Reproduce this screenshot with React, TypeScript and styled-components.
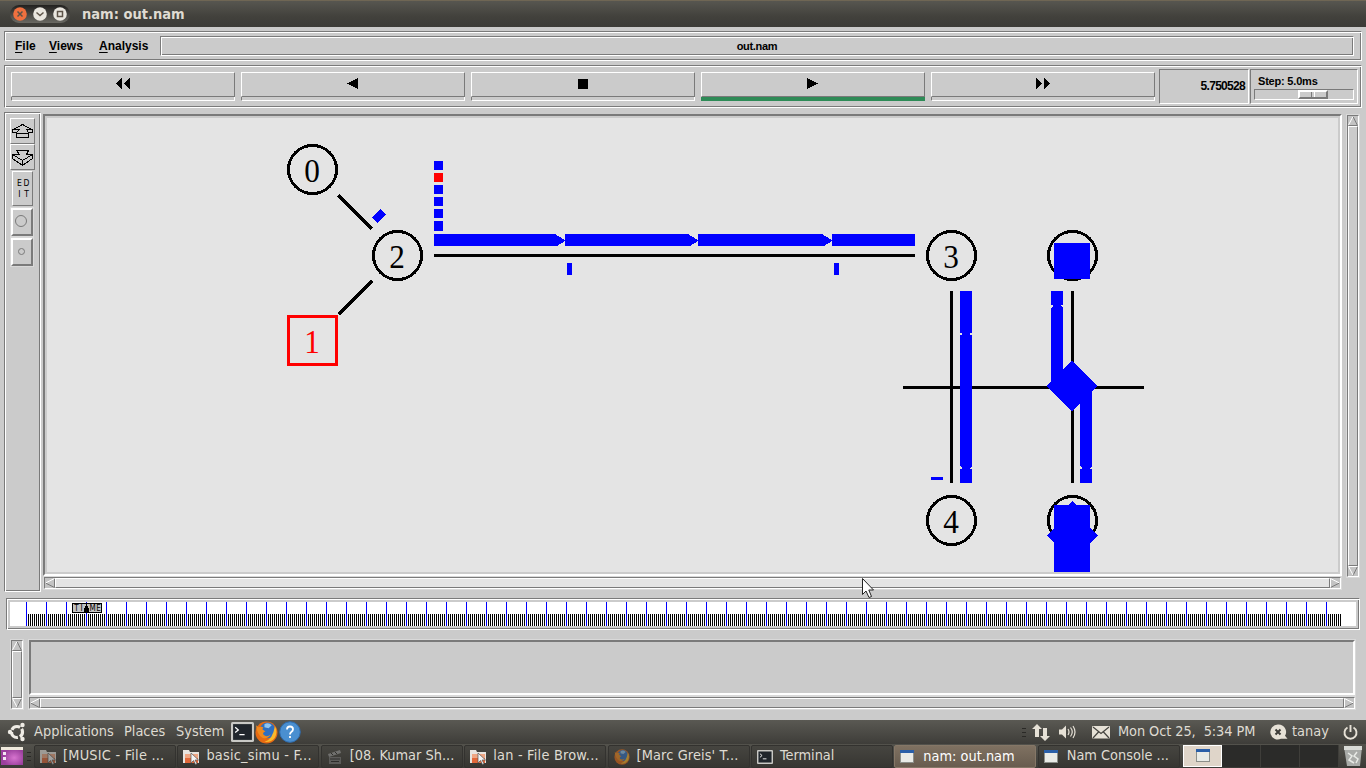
import React from "react";
import styled, { createGlobalStyle, css } from "styled-components";

const BG = "#cbcbcb";
const DARK = "#7a7a7a";
const CANVAS = "#e4e4e4";
const BLUE = "#0000ff";
const CREAM = "#dfdbd2";

const Global = createGlobalStyle`
  * { box-sizing: border-box; }
  body { margin: 0; background: ${BG}; overflow: hidden; }
  svg { display: block; flex: none; }
`;

const sunken = (w = 1) => css`
  border: ${w}px solid;
  border-color: ${DARK} #fff #fff ${DARK};
`;
const raised = (w = 1) => css`
  border: ${w}px solid;
  border-color: #fff ${DARK} ${DARK} #fff;
`;
const groove = css`
  border: 1px solid;
  border-color: ${DARK} #fff #fff ${DARK};
  box-shadow: inset 1px 1px 0 #fff, inset -1px -1px 0 ${DARK};
`;

const Screen = styled.div`
  width: 1366px;
  height: 768px;
  display: flex;
  flex-direction: column;
  background: ${BG};
  position: relative;
  font: bold 12px "Liberation Sans", sans-serif;
  color: #000;
`;

const TitleBar = styled.div`
  height: 27px;
  flex: none;
  display: flex;
  align-items: center;
  padding-left: 10px;
  border-top: 1px solid #6f6654;
  background: linear-gradient(#575650, #42413c 60%, #3c3b37);
`;
const WindowButtons = styled.div`
  width: 60px;
  height: 18px;
  display: flex;
  align-items: center;
  gap: 6px;
  padding-left: 3px;
  border-radius: 9px;
  background: linear-gradient(#22211f, #6a6963);
`;
const TitleText = styled.div`
  margin-left: 12px;
  font: bold 14.5px "DejaVu Sans Condensed", "DejaVu Sans", sans-serif;
  font-stretch: condensed;
  color: ${CREAM};
  white-space: pre;
`;

const MenuBar = styled.div`
  ${groove}
  margin: 4px 4px 0;
  height: 30px;
  flex: none;
  display: flex;
  padding: 4px 7px 0 10px;
`;
const MenuItem = styled.div<{ $w: number }>`
  width: ${(p) => p.$w}px;
  line-height: 20px;
  u { text-underline-offset: 2px; text-decoration-thickness: 1px; }
`;
const FileLabel = styled.div`
  ${groove}
  flex: 1;
  height: 20px;
  text-align: center;
  font-size: 11px;
  letter-spacing: -0.3px;
  line-height: 18px;
`;

const Transport = styled.div`
  ${groove}
  margin: 4px 4px 0;
  height: 43px;
  flex: none;
  display: flex;
  padding: 3px 3px 0 6px;
`;
const TransportKey = styled.div`
  width: 224px;
  margin: 3px 6px 0 0;
`;
const KeyFace = styled.div`
  ${raised()}
  height: 25px;
  display: flex;
  justify-content: center;
  align-items: center;
  padding-bottom: 1px;
`;
const KeyLamp = styled.div<{ $on?: boolean }>`
  ${sunken()}
  height: 4px;
  border-top: 0;
  background: ${(p) => (p.$on ? "#2e8b57" : BG)};
  ${(p) => p.$on && "border-color: #2e8b57;"}
`;
const Clock = styled.div`
  ${sunken()}
  width: 90px;
  height: 35px;
  margin-left: -2px;
  padding-right: 3px;
  text-align: right;
  line-height: 33px;
  font-size: 12px;
  letter-spacing: -0.7px;
`;
const StepBox = styled.div`
  ${sunken()}
  width: 108px;
  height: 35px;
  margin-left: 1px;
  padding: 5px 3px 0 3px;
  font-size: 11px;
  line-height: 12px;
`;
const StepText = styled.div`
  padding-left: 4px;
  height: 14px;
  letter-spacing: -0.2px;
`;
const Slider = styled.div`
  ${sunken()}
  height: 11px;
  padding-left: 43px;
`;
const SliderKnob = styled.div`
  ${raised(2)}
  width: 30px;
  height: 9px;
  display: flex;
  justify-content: center;
  &::after {
    content: "";
    width: 2px;
    border-left: 1px solid ${DARK};
    border-right: 1px solid #fff;
  }
`;

const MainRow = styled.div`
  margin: 4px 4px 0;
  height: 480px;
  flex: none;
  display: flex;
`;
const SideTools = styled.div`
  ${groove}
  width: 37px;
  padding: 5px 0 0 5px;
`;
const ToolKey = styled.div<{ $w: number; $h: number; $b?: number; $x?: number; $gap?: number }>`
  ${(p) => raised(p.$b ?? 1)}
  width: ${(p) => p.$w}px;
  height: ${(p) => p.$h}px;
  margin: ${(p) => p.$gap ?? 0}px 0 0 ${(p) => p.$x ?? 0}px;
  outline: ${(p) => (p.$b ? "1px solid #d9d9d9" : "none")};
`;
const EditLabel = styled.div`
  display: grid;
  grid-template-columns: 7px 7px;
  justify-content: center;
  text-align: center;
  padding: 6px 0 0 1px;
  font: 8.5px/11px "DejaVu Sans Condensed", "DejaVu Sans", sans-serif;
  font-stretch: condensed;
`;
const ViewColumn = styled.div`
  margin: 2px 0 0 2px;
  width: 1299px;
`;
const CanvasFrame = styled.div`
  ${sunken(2)}
  height: 462px;
  background: ${BG};
  padding: 2px;
`;

const Bar = styled.div<{ $vertical?: boolean; $len: number; $x?: number; $y?: number }>`
  ${sunken()}
  flex: none;
  display: flex;
  flex-direction: ${(p) => (p.$vertical ? "column" : "row")};
  width: ${(p) => (p.$vertical ? 12 : p.$len)}px;
  height: ${(p) => (p.$vertical ? p.$len : 12)}px;
  margin: ${(p) => p.$y ?? 0}px 0 0 ${(p) => p.$x ?? 0}px;
  background: #c3c3c3;
  box-shadow: 0 0 0 1px #d9d9d9;
`;
const Thumb = styled.div<{ $tone: string }>`
  ${raised()}
  flex: 1;
  background: ${(p) => p.$tone};
`;

const Timeline = styled.div`
  ${groove}
  margin: 6px 6px 0;
  height: 32px;
  flex: none;
  padding: 3px;
`;
const BottomRow = styled.div`
  margin: 10px 0 0 11px;
  height: 80px;
  flex: none;
  display: flex;
`;
const NotesColumn = styled.div`
  margin-left: 6px;
  width: 1326px;
`;
const Notes = styled.div`
  ${sunken(2)}
  height: 55px;
  box-shadow: 0 0 0 1px #d9d9d9;
`;

const Panel = styled.div`
  height: 24px;
  flex: none;
  display: flex;
  align-items: center;
  font: 14.4px "DejaVu Sans Condensed", "DejaVu Sans", sans-serif;
  font-stretch: condensed;
  color: ${CREAM};
  background: linear-gradient(#5a5953, #3e3d39);
`;
const TaskPanel = styled(Panel)`
  align-items: stretch;
  background: linear-gradient(#53524c, #3b3a36);
`;
const PanelText = styled.div<{ $w: number; $ls?: number }>`
  width: ${(p) => p.$w}px;
  letter-spacing: ${(p) => p.$ls ?? 0}px;
  white-space: pre;
  line-height: 22px;
  height: 24px;
`;
const PanelIcon = styled.div<{ $w: number }>`
  width: ${(p) => p.$w}px;
`;
const Spacer = styled.div`
  flex: 1;
`;
const Task = styled.div<{ $active?: boolean }>`
  width: 142px;
  margin: 1px 1.4px 0 0;
  display: flex;
  align-items: center;
  padding-left: 5px;
  border-radius: 2px;
  border: 1px solid ${(p) => (p.$active ? "#857767" : "#33322f")};
  color: ${(p) => (p.$active ? "#fff" : CREAM)};
  background: ${(p) =>
    p.$active ? "linear-gradient(#7f7161, #685c4f)" : "linear-gradient(#464540, #373632)"};
`;
const TaskIcon = styled.div<{ $dim?: boolean }>`
  width: 23px;
  opacity: ${(p) => (p.$dim ? 0.55 : 1)};
`;
const TaskText = styled.div<{ $active?: boolean; $ls?: number }>`
  white-space: pre;
  line-height: 18px;
  letter-spacing: ${(p) => p.$ls ?? 0}px;
  padding-bottom: ${(p) => (p.$active ? 1 : 3)}px;
`;
const Workspaces = styled.div`
  display: flex;
  margin: 1px 0 1px 2px;
  background: #2b2b29;
`;
const Workspace = styled.div<{ $on?: boolean }>`
  width: 39px;
  display: flex;
  justify-content: center;
  padding-top: 3px;
  ${(p) =>
    p.$on
      ? "border: 1px solid #fff; background: #dfd5c9;"
      : "border-right: 1px solid #3f3e3a;"}
`;
const Cursor = styled.svg`
  position: absolute;
  left: 861px;
  top: 577px;
`;

const ARROWS: Record<string, string[]> = {
  up: ["M5 0.5L0.5 9", "M5 0.5L9.5 9.5M0.5 9.5H9.5"],
  down: ["M0.5 0.5H9.5M0.5 0.5L5 9", "M9.5 0.5L5 9.5"],
  left: ["M0.5 5L9.5 0.5", "M0.5 5L9.5 9.5V0.5"],
  right: ["M0.5 9.5V0.5L9.5 5", "M9.5 5L0.5 9.5"],
};

const Arrow = ({ dir }: { dir: string }) => (
  <svg width="10" height="10" fill="none">
    <path d={ARROWS[dir][1]} stroke={DARK} />
    <path d={ARROWS[dir][0]} stroke="#fff" />
  </svg>
);

const Scrollbar = (p: { vertical?: boolean; len: number; x?: number; y?: number; tone?: string }) => (
  <Bar $vertical={p.vertical} $len={p.len} $x={p.x} $y={p.y}>
    <Arrow dir={p.vertical ? "up" : "left"} />
    <Thumb $tone={p.tone ?? BG} />
    <Arrow dir={p.vertical ? "down" : "right"} />
  </Bar>
);

const KEYS = [
  "M7 0V11L1 5.5ZM15 0V11L9 5.5Z",
  "M13 0V11L2 5.5Z",
  "M3 1H13V11H3Z",
  "M2 0V11L13 5.5Z",
  "M1 0V11L7 5.5ZM9 0V11L15 5.5Z",
];

const NODES = [
  { id: "0", x: 312.5, y: 169.5 },
  { id: "2", x: 397.5, y: 255.5 },
  { id: "3", x: 951.5, y: 255.5 },
  { id: "5", x: 1072.5, y: 255.5 },
  { id: "4", x: 951.5, y: 520.5 },
  { id: "6", x: 1072.5, y: 520.5 },
];

const Network = () => (
  <svg width="1291" height="454" viewBox="47 118 1291 454" style={{ background: CANVAS }} shapeRendering="crispEdges">
    <g stroke="#000" strokeWidth="3" fill="none">
      <path d="M338.5 195.5L372 229M372 281L338.5 314.5" />
      <path d="M434 255.5H915M903 387.5H1144M951.5 291V483M1072.5 291V483" />
      {NODES.map((n) => (
        <circle key={n.id} cx={n.x} cy={n.y} r="24" />
      ))}
      <rect x="288.5" y="316.5" width="48" height="48" stroke="#f00" />
    </g>
    <g fontFamily="Liberation Serif, serif" fontWeight="400" fontSize="34" textAnchor="middle">
      {NODES.filter((n) => n.id < "5").map((n) => (
        <text key={n.id} transform={`translate(${n.x - 0.5} ${n.y + 12.5}) scale(.92 1)`}>
          {n.id}
        </text>
      ))}
      <text transform="translate(312 353) scale(.92 1)" fill="#f00">
        1
      </text>
    </g>
    <g fill={BLUE}>
      <path d="M381 209L386 215L377.5 223L372 217.5Z" />
      {[161, 185, 197, 209, 221].map((y) => (
        <rect key={y} x="434" y={y} width="9" height={y === 221 ? 10 : 9} />
      ))}
      <rect x="434" y="173" width="9" height="9" fill="#f00" />
      <path d="M434 234H555L565 240V241L557 246H434Z" />
      <path d="M565 234H688L698 240V241L690 246H565Z" />
      <path d="M698 234H822L832 240V241L824 246H698Z" />
      <path d="M832 234H915V246H832Z" />
      <path d="M567 263H572V275H567ZM834 263H839V275H834ZM931 477H943V480H931Z" />
      <path d="M960 291H972V333H970V335H972V466L970 468V469H972V483H960V469H962V468L960 466V335H962V333H960Z" />
      <path d="M1051 291H1063V305H1061V306L1063 308V386H1051V308L1053 306V305H1051Z" />
      <path d="M1080 391H1092V466L1090 468V469H1092V483H1080V469H1082V468L1080 466Z" />
      <path d="M1054 243H1090V279H1054Z" />
      <path d="M1072 361L1097.500 386L1072 411L1046.500 386Z" />
      <path d="M1054 505H1068L1072 501L1076 505H1090V528L1097.500 535.5L1090 543V572H1054V543L1046.500 535.5L1054 528Z" />
    </g>
  </svg>
);

const majors = Array.from({ length: 66 }, (_, i) => 26 + i * 20);
const minors = Array.from({ length: 658 }, (_, i) => 26 + i * 2).filter((x) => (x - 26) % 20 !== 0);

const TimeScale = () => (
  <svg width="1346" height="24" viewBox="10 602 1346 24" style={{ background: "#fff" }} shapeRendering="crispEdges">
    <path d={majors.map((x) => `M${x + 0.5} 602v24`).join("")} stroke={BLUE} />
    <path d={minors.map((x) => `M${x + 0.5} 614v12`).join("")} stroke="#000" />
    <rect x="72.5" y="603.5" width="29" height="9" fill="#c3c3c3" stroke="#000" />
    <path d="M86 603h1v3h1v2h1v5h-5v-5h1v-2h1z" fill="#000" />
    <g
      fontFamily="DejaVu Sans Condensed, DejaVu Sans, sans-serif"
      fontStretch="condensed"
      fontSize="8"
      fontWeight="400"
      textAnchor="middle"
    >
      <text x="76.5" y="611">T</text>
      <text x="81.5" y="611">I</text>
      <text x="92.5" y="611">M</text>
      <text x="98.5" y="611">E</text>
    </g>
  </svg>
);

const WindowDot = ({ fill, mark }: { fill: string; mark: string }) => (
  <svg width="14" height="14">
    <circle cx="7" cy="7" r="6.8" fill={fill} />
    <path d={mark} stroke="#5d5348" strokeWidth="1.5" fill="none" />
  </svg>
);

const TerminalIcon = ({ w, h }: { w: number; h: number }) => (
  <svg width={w} height={h} viewBox="0 0 22 19" preserveAspectRatio="none">
    <rect width="22" height="19" rx="1.5" fill="#c9c9c5" />
    <rect x="2" y="2" width="18" height="15" fill="#20262c" />
    <path d="M4 5l3 2.5-3 2.5M8 12h5" stroke="#fff" strokeWidth="1.2" fill="none" />
  </svg>
);
const FirefoxIcon = ({ s }: { s: number }) => (
  <svg width={s} height={s} viewBox="0 0 22 22">
    <circle cx="11" cy="11" r="10.5" fill="#e66a12" />
    <circle cx="12" cy="9" r="7.5" fill="#2f6fc0" />
    <path d="M9 3q4-2 7 1l-3 3-4-1z" fill="#8fc4ee" />
    <path d="M1 4L3.500 6Q6 5 8 6L7 8L10 10Q7 11 8 13Q11 16 15 13Q12 18 7 16Q2 13 1 4Z" fill="#f08a1d" />
    <path d="M19 5Q22 10 19 16Q15 21 9 20Q17 18 19 5Z" fill="#f9b92c" />
  </svg>
);
const FolderIcon = () => (
  <svg width="17" height="16">
    <path d="M0 1h6l1 2h9v11H0z" fill="#e8e4df" />
    <path d="M2 5h13v9H2z" fill="#e2683a" />
    <path d="M2 5h13v4H2z" fill="#efa683" />
    <path d="M8 4v10l2.500-2.500 2 4 1.500-.8-2-3.700h3.500z" fill="#f4f4f4" stroke="#555" strokeWidth=".7" />
  </svg>
);
const ClapperIcon = () => (
  <svg width="16" height="16">
    <path d="M1 5L13 1l1 3L2 8z" fill="#999" />
    <path d="M2 8h12v7H2z" fill="#777" />
    <path d="M4 4l2 2M8 3l2 2M3 10h10M4 12.500h8" stroke="#222" />
  </svg>
);
const WindowIcon = () => (
  <svg width="14" height="13">
    <rect x=".5" y=".5" width="13" height="12" fill="#e9ebe7" stroke="#8c8f8a" />
    <rect width="14" height="3" fill="#2a5fa8" />
  </svg>
);
const Grip = () => (
  <svg width="4" height="9">
    <path d="M0 .5h4M0 4.500h4M0 8.500h4" stroke="#2a2926" />
  </svg>
);

const TASKS = [
  { text: "[MUSIC - File ...", icon: <FolderIcon />, dim: true, ls: 0.22 },
  { text: "basic_simu - F...", icon: <FolderIcon />, ls: 0.22 },
  { text: "[08. Kumar Sh...", icon: <ClapperIcon />, dim: true },
  { text: "lan - File Brow...", icon: <FolderIcon />, ls: 0.22 },
  { text: "[Marc Greis' T...", icon: <FirefoxIcon s={16} />, dim: true, ls: 0.12 },
  { text: "Terminal", icon: <TerminalIcon w={16} h={14} /> },
  { text: "nam: out.nam", icon: <WindowIcon />, active: true },
  { text: "Nam Console ...", icon: <WindowIcon /> },
];

export default function App() {
  return (
    <Screen>
      <Global />
      <TitleBar>
        <WindowButtons>
          <WindowDot fill="#f0703f" mark="M4.500 4.500l5 5M9.500 4.500l-5 5" />
          <WindowDot fill="#e9e6df" mark="M3.500 5.500l3.500 3 3.500-3" />
          <WindowDot fill="#e9e6df" mark="M4.500 4.500h5v5h-5z" />
        </WindowButtons>
        <TitleText>nam: out.nam</TitleText>
      </TitleBar>

      <MenuBar>
        <MenuItem $w={34}><u>F</u>ile</MenuItem>
        <MenuItem $w={50}><u>V</u>iews</MenuItem>
        <MenuItem $w={61}><u>A</u>nalysis</MenuItem>
        <FileLabel>out.nam</FileLabel>
      </MenuBar>

      <Transport>
        {KEYS.map((d, i) => (
          <TransportKey key={d}>
            <KeyFace>
              <svg width="16" height="12" shapeRendering="crispEdges"><path d={d} /></svg>
            </KeyFace>
            <KeyLamp $on={i === 3} />
          </TransportKey>
        ))}
        <Clock>5.750528</Clock>
        <StepBox>
          <StepText>Step: 5.0ms</StepText>
          <Slider><SliderKnob /></Slider>
        </StepBox>
      </Transport>

      <MainRow>
        <SideTools>
          <ToolKey $w={25} $h={26}>
            <svg width="23" height="24" fill="none" stroke="#000" shapeRendering="crispEdges">
              <path d="M11.500 5.500L20.500 10.500H21.500V13.500H17.500V18.500H5.500V13.500H1.500V10.500H2.500ZM5.500 14.500H17.500M2.500 10.500H8.500L5.500 13.500M20.500 10.500H15.500L17.500 13.500" />
            </svg>
          </ToolKey>
          <ToolKey $w={25} $h={26}>
            <svg width="23" height="24" fill="none" stroke="#000" shapeRendering="crispEdges">
              <path d="M5.500 5.500H17.500L15.500 9.500H21.500V13.500L11.500 20.500L1.500 13.500V9.500H8.500L5.500 5.500M1.500 9.500L11.500 15.500L21.500 9.500M11.500 15.500V20.500" />
            </svg>
          </ToolKey>
          <ToolKey $w={21} $h={35} $x={2} $gap={1}>
            <EditLabel>
              <span>E</span>
              <span>D</span>
              <span>I</span>
              <span>T</span>
            </EditLabel>
          </ToolKey>
          <ToolKey $w={22} $h={28} $b={2} $x={1} $gap={2}>
            <svg width="18" height="24" fill="none" stroke={DARK}><circle cx="8" cy="11" r="5.500" /></svg>
          </ToolKey>
          <ToolKey $w={22} $h={28} $b={2} $x={1} $gap={2}>
            <svg width="18" height="24" fill="none" stroke={DARK}><circle cx="8.500" cy="11.500" r="3" /></svg>
          </ToolKey>
        </SideTools>
        <ViewColumn>
          <CanvasFrame><Network /></CanvasFrame>
          <Scrollbar len={1297} x={1} y={1} tone={CANVAS} />
        </ViewColumn>
        <Scrollbar vertical len={462} x={5} y={3} />
      </MainRow>

      <Timeline><TimeScale /></Timeline>

      <BottomRow>
        <Scrollbar vertical len={69} />
        <NotesColumn>
          <Notes />
          <Scrollbar len={1326} y={2} />
        </NotesColumn>
      </BottomRow>

      <Panel>
        <PanelIcon $w={34}>
          <svg width="34" height="24">
            <circle cx="17" cy="12" r="5.500" fill="none" stroke="#efece5" strokeWidth="3.200" strokeDasharray="9.500 2" strokeDashoffset="4" />
            <g fill="#efece5"><circle cx="10" cy="12" r="2.200" /><circle cx="22.500" cy="5" r="2.200" /><circle cx="22.500" cy="19" r="2.200" /></g>
          </svg>
        </PanelIcon>
        <PanelText $w={90} $ls={0.07}>Applications</PanelText>
        <PanelText $w={52}>Places</PanelText>
        <PanelText $w={55}>System</PanelText>
        <PanelIcon $w={24}><TerminalIcon w={23} h={20} /></PanelIcon>
        <PanelIcon $w={24}><FirefoxIcon s={23} /></PanelIcon>
        <PanelIcon $w={23}>
          <svg width="22" height="22">
            <circle cx="11" cy="11" r="10.300" fill="#4a8fd0" stroke="#2f6cae" />
            <path d="M8 8.500Q8 5.500 11 5.500Q14 5.500 14 8.300Q14 10 12.300 11Q11 12 11 13.500M11 15v2" fill="none" stroke="#fff" strokeWidth="1.800" />
          </svg>
        </PanelIcon>
        <Spacer />
        <PanelIcon $w={10}><Grip /></PanelIcon>
        <PanelIcon $w={27}>
          <svg width="18" height="17" fill="#e6e1d6"><path d="M5 0l5 5H7v8H3V5H0zM13 17l-5-5h3V4h4v8h3z" /></svg>
        </PanelIcon>
        <PanelIcon $w={33}>
          <svg width="17" height="14">
            <path d="M0 4.500h3l4-4v13l-4-4H0z" fill="#e6e1d6" />
            <path d="M9 4q2 3 0 6M11.500 2.500q3.500 4.500 0 9M14 1q4 6 0 12" fill="none" stroke="#e6e1d6" strokeWidth="1.200" />
          </svg>
        </PanelIcon>
        <PanelIcon $w={26}>
          <svg width="18" height="13"><rect width="18" height="12.500" rx="1" fill="#e6e1d6" /><path d="M1 1l8 6.500L17 1M1 12l5.500-6M17 12l-5.500-6" fill="none" stroke="#45443f" strokeWidth="1.200" /></svg>
        </PanelIcon>
        <PanelText $w={152} $ls={-0.08}>Mon Oct 25,  5:34 PM</PanelText>
        <PanelIcon $w={22}>
          <svg width="18" height="16"><path d="M8 .5a7.500 7.500 0 1 0 3 14.300h6.500l-2.500-3A7.500 7.500 0 0 0 8 .5z" fill="#e6e1d6" /><path d="M5.500 5.500l5 5M10.500 5.500l-5 5" stroke="#3d3c38" strokeWidth="2" /></svg>
        </PanelIcon>
        <PanelText $w={51}>tanay</PanelText>
        <PanelIcon $w={23}>
          <svg width="15" height="16" fill="none" stroke="#e6e1d6" strokeWidth="1.900"><path d="M4.500 3.500a6 6 0 1 0 6 0M7.500 1v7" /></svg>
        </PanelIcon>
      </Panel>

      <TaskPanel>
        <PanelIcon $w={27}>
          <svg width="23" height="24">
            <defs>
              <radialGradient id="desk" cx=".6" cy=".6">
                <stop offset="0" stopColor="#d774cf" />
                <stop offset="1" stopColor="#9a3f9c" />
              </radialGradient>
            </defs>
            <rect x="1" y="3" width="22" height="18" fill="url(#desk)" />
            <rect x="1" y="3" width="22" height="3" fill="#efe9dc" />
            <path d="M3 8h3v3H3zM3 13h3v3H3z" fill="#f3e6f3" />
          </svg>
        </PanelIcon>
        <PanelIcon $w={7}><svg width="4" height="24"><path d="M0 8.500h4M0 12.500h4M0 16.500h4" stroke="#2a2926" /></svg></PanelIcon>
        {TASKS.map((t) => (
          <Task key={t.text} $active={t.active}>
            <TaskIcon $dim={t.dim}>{t.icon}</TaskIcon>
            <TaskText $active={t.active} $ls={t.ls}>{t.text}</TaskText>
          </Task>
        ))}
        <Workspaces>
          <Workspace $on><WindowIcon /></Workspace>
          <Workspace />
          <Workspace />
          <Workspace />
        </Workspaces>
        <Spacer />
        <PanelIcon $w={23}>
          <svg width="20" height="24"><path d="M1 3h18l-2 19H4z" fill="#a9aba8" /><path d="M1 2h18v4H1z" fill="#d8dad6" /><path d="M5 9l4 3-3 4 5 3M14 8l-3 4 4 3-2 4" stroke="#e8eae6" strokeWidth="1.500" fill="none" /></svg>
        </PanelIcon>
      </TaskPanel>

      <Cursor width="14" height="22">
        <path d="M1.500 1.500V17.500L5 14L8 20.500L10.500 19.500L7.800 13H12.500Z" fill="#fff" stroke="#222" />
      </Cursor>
    </Screen>
  );
}
